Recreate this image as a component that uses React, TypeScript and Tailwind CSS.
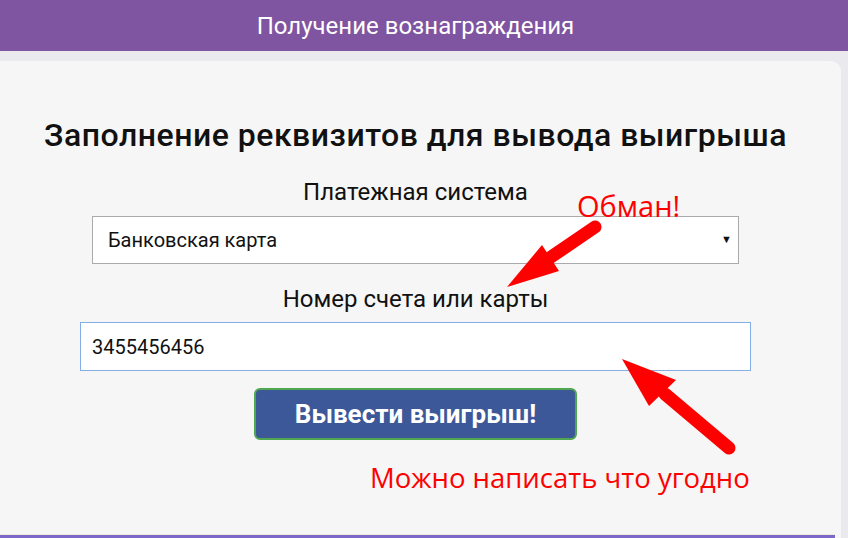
import React from "react";

export default function App() {
  return (
    <div
      className="relative w-[848px] h-[538px] overflow-hidden bg-[#e9e9ee] flex flex-col"
      style={{ fontFamily: "Roboto, 'Liberation Sans', sans-serif" }}
    >
      <div className="h-[51px] shrink-0 bg-[#7f54a0] flex items-center">
        <div className="w-[831px] text-center text-white text-[24px]">Получение вознаграждения</div>
      </div>
      <div className="mt-[10px] w-[841px] flex-1 bg-[#f6f6f6] rounded-tr-[10px] flex flex-col">
        <div className="w-[831px] flex flex-col items-center">
          <h1 className="mt-[56px] h-[36px] leading-[36px] text-[32px] font-medium tracking-[0.5px] text-[#111] whitespace-nowrap">
            Заполнение реквизитов для вывода выигрыша
          </h1>
          <div className="mt-[25px] h-[28px] leading-[28px] text-[24px] text-[#111]">
            Платежная система
          </div>
          <div className="mt-[10px] w-[647px] h-[48px] bg-white border border-[#aaaaaa] flex items-center justify-between pl-[15px] pr-[6px] text-[20px] text-[#111]">
            <span>Банковская карта</span>
            <span className="text-[11px]">▼</span>
          </div>
          <div className="mt-[21px] h-[28px] leading-[28px] text-[24px] text-[#111]">
            Номер счета или карты
          </div>
          <div className="mt-[9px] w-[671px] h-[49px] bg-white border border-[#86aee6] flex items-center pl-[11px] text-[20px] text-[#111]">
            3455456456
          </div>
          <button className="mt-[17px] w-[323px] h-[52px] bg-[#3c5899] border-2 border-[#4fa84f] rounded-[6px] text-white text-[26px] font-bold flex items-center justify-center whitespace-nowrap">
            Вывести выигрыш!
          </button>
        </div>
        <div className="mt-auto w-[835px]">
          <div className="h-[1px] bg-[#efe8d8]" />
          <div className="h-[3px] bg-[#7b68c8]" />
        </div>
      </div>

      <div
        className="absolute left-[577px] top-[189px] text-[29px] leading-[34px] text-[#ff0000]"
        style={{ fontFamily: "'Open Sans', 'Noto Sans', sans-serif" }}
      >
        Обман!
      </div>
      <div
        className="absolute left-[370px] top-[458px] text-[27.5px] leading-[40px] text-[#ff0000] whitespace-nowrap"
        style={{ fontFamily: "'Open Sans', 'Noto Sans', sans-serif" }}
      >
        Можно написать что угодно
      </div>

      <svg
        className="absolute left-0 top-0 pointer-events-none"
        width="848"
        height="538"
        viewBox="0 0 848 538"
      >
        <line x1="595" y1="227" x2="548" y2="259" stroke="#ff0000" strokeWidth="13" strokeLinecap="round" />
        <polygon points="507,287 542,245 559,271" fill="#ff0000" />
        <line x1="729" y1="448" x2="665" y2="394" stroke="#ff0000" strokeWidth="13" strokeLinecap="round" />
        <polygon points="622,359 676,380 649,406" fill="#ff0000" />
      </svg>
    </div>
  );
}
